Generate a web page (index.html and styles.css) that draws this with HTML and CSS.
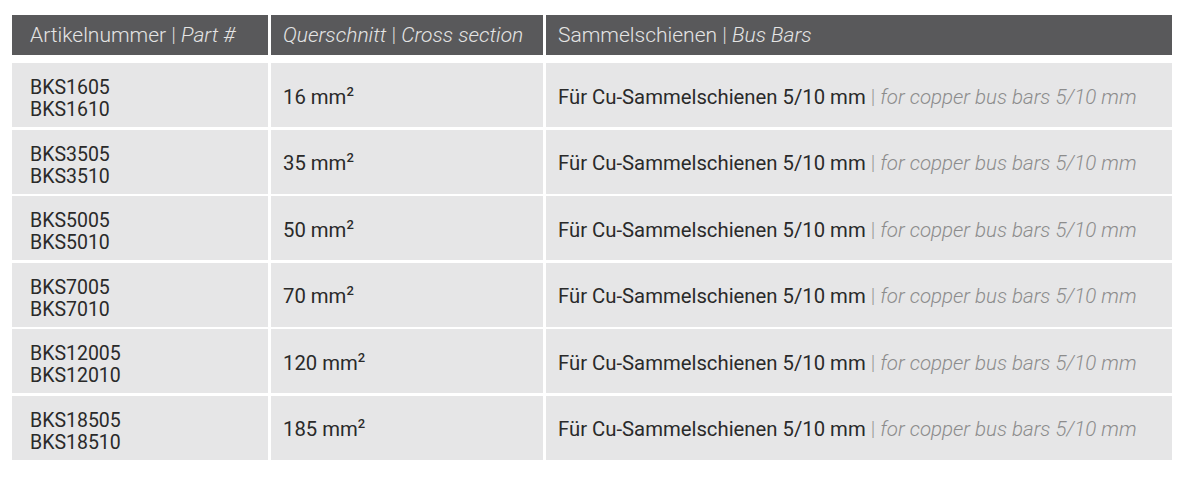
FILE: index.html
```html
<!DOCTYPE html>
<html lang="de">
<head>
<meta charset="utf-8">
<title>Sammelschienen</title>
<link rel="stylesheet" href="styles.css">
</head>
<body>
<div class="table">
  <div class="head">
    <div class="hcell"><span>Artikelnummer <span class="hsep">|</span> <em>Part #</em></span></div>
    <div class="hcell"><span><em>Querschnitt</em> <span class="hsep">|</span> <em>Cross section</em></span></div>
    <div class="hcell"><span>Sammelschienen <span class="hsep">|</span> <em>Bus Bars</em></span></div>
  </div>
  <div class="body">
    <div class="cell part">BKS1605<br>BKS1610</div>
    <div class="cell"><span>16 mm<sup>2</sup></span></div>
    <div class="cell"><span>Für Cu-Sammelschienen 5/10 mm <span class="sep">|</span> <em class="en">for copper bus bars 5/10 mm</em></span></div>

    <div class="cell part">BKS3505<br>BKS3510</div>
    <div class="cell"><span>35 mm<sup>2</sup></span></div>
    <div class="cell"><span>Für Cu-Sammelschienen 5/10 mm <span class="sep">|</span> <em class="en">for copper bus bars 5/10 mm</em></span></div>

    <div class="cell part">BKS5005<br>BKS5010</div>
    <div class="cell"><span>50 mm<sup>2</sup></span></div>
    <div class="cell"><span>Für Cu-Sammelschienen 5/10 mm <span class="sep">|</span> <em class="en">for copper bus bars 5/10 mm</em></span></div>

    <div class="cell part">BKS7005<br>BKS7010</div>
    <div class="cell"><span>70 mm<sup>2</sup></span></div>
    <div class="cell"><span>Für Cu-Sammelschienen 5/10 mm <span class="sep">|</span> <em class="en">for copper bus bars 5/10 mm</em></span></div>

    <div class="cell part">BKS12005<br>BKS12010</div>
    <div class="cell"><span>120 mm<sup>2</sup></span></div>
    <div class="cell"><span>Für Cu-Sammelschienen 5/10 mm <span class="sep">|</span> <em class="en">for copper bus bars 5/10 mm</em></span></div>

    <div class="cell part">BKS18505<br>BKS18510</div>
    <div class="cell"><span>185 mm<sup>2</sup></span></div>
    <div class="cell"><span>Für Cu-Sammelschienen 5/10 mm <span class="sep">|</span> <em class="en">for copper bus bars 5/10 mm</em></span></div>
  </div>
</div>
</body>
</html>
```

FILE: styles.css
```css
html, body {
  margin: 0;
  padding: 0;
  background: #ffffff;
}

body {
  font-family: Roboto, "Liberation Sans", sans-serif;
  color: #2a2a2a;
}

.table {
  padding: 15px 0 0 12px;
  width: 1160px;
}

.head {
  display: grid;
  grid-template-columns: 256px 272px 626px;
  column-gap: 3px;
  margin-bottom: 8px;
}

.hcell {
  background: #59595b;
  color: #e4e4e4;
  height: 40px;
  display: flex;
  align-items: center;
  font-size: 21px;
  font-weight: 300;
  white-space: pre;
}

.head .hcell:first-child {
  padding-left: 18px;
}

.head .hcell:nth-child(2),
.head .hcell:nth-child(3) {
  padding-left: 12px;
}

.hsep {
  color: #d8d8d8;
}

.body {
  display: grid;
  grid-template-columns: 256px 272px 626px;
  grid-auto-rows: 64px;
  column-gap: 3px;
  row-gap: 2.5px;
}

.cell {
  background: #e6e6e7;
  display: flex;
  align-items: center;
  padding: 3px 0 0 12px;
  font-size: 20.3px;
  white-space: pre;
}

.cell.part {
  display: block;
  padding: 14px 0 0 18px;
  line-height: 22px;
  font-size: 19.5px;
  white-space: normal;
}

sup {
  font-size: 13px;
  font-weight: 500;
  line-height: 0;
  position: relative;
  top: 0;
}

.sep {
  color: #9a9a9a;
  font-weight: 300;
}

.en {
  color: #8c8c8c;
  font-weight: 300;
  font-size: 20.5px;
}

em {
  font-style: italic;
}
```
